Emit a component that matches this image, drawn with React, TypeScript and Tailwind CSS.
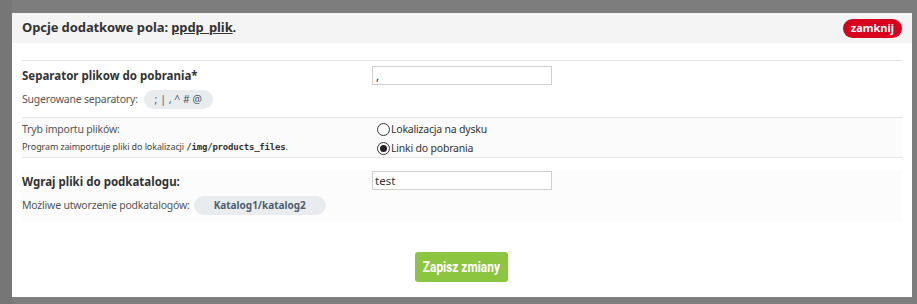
import React from "react";

export default function App() {
  return (
    <div className="w-[917px] h-[304px] bg-[#7d7d7d] relative overflow-hidden" style={{ fontFamily: '"Noto Sans", "Open Sans", sans-serif' }}>
      <div className="absolute left-0 top-0 w-[12px] h-[304px] bg-[#767676]" />
      <div className="absolute left-[12px] top-[13px] w-[900px] h-[284px] bg-white flex flex-col">
        <div className="h-[30px] bg-[#f4f4f4] flex items-center justify-between pl-[10px] pr-[10px]">
          <div className="text-[13px] font-bold text-[#333] tracking-[-0.1px]">
            Opcje dodatkowe pola: <span className="underline">ppdp_plik</span>.
          </div>
          <div className="h-[19px] px-[8px] rounded-full bg-[#d8001c] text-white text-[11px] font-bold flex items-center">zamknij</div>
        </div>
        <div className="px-[10px] pt-[17px]">
          <div className="border-t border-[#e2e2e2]" />
          <div className="flex h-[56px]">
            <div className="w-[350px] pt-[5px]">
              <div className="text-[11.5px] font-bold text-[#333] h-[19px] leading-[19px]">Separator plikow do pobrania*</div>
              <div className="flex items-center mt-[5px] text-[10.5px] tracking-[-0.2px] text-[#555]">
                <span>Sugerowane separatory:</span>
                <span className="ml-[6px] h-[19px] w-[69px] rounded-full bg-[#e9ecef] text-[#4c5966] text-[10.5px] tracking-normal flex items-center justify-center">; | , ^ # @</span>
              </div>
            </div>
            <div className="pt-[5px]">
              <div className="w-[180px] h-[19px] border border-[#cfcfcf] text-[12px] leading-[17px] pl-[3px] text-[#333]">,</div>
            </div>
          </div>
          <div className="border-t border-[#e6e6e6]" />
          <div className="flex h-[39px] bg-[#fbfbfb]">
            <div className="w-[350px] pt-[3px]">
              <div className="text-[10.5px] tracking-[-0.2px] text-[#555] leading-[16px]">Tryb importu plików:</div>
              <div className="text-[9px] tracking-[-0.1px] text-[#444] leading-[14px] mt-[3px]">
                Program zaimportuje pliki do lokalizacji <span className="font-bold text-[9px] tracking-[-0.2px] text-[#333]" style={{ fontFamily: '"DejaVu Sans Mono", monospace' }}>/img/products_files</span>.
              </div>
            </div>
            <div className="pl-[5px] pt-[3px] text-[10.5px] tracking-[-0.2px] text-[#333]">
              <div className="flex items-center h-[17px]">
                <span className="w-[13px] h-[13px] rounded-full border border-[#333] bg-white mr-[1px]" />
                <span>Lokalizacja na dysku</span>
              </div>
              <div className="flex items-center h-[17px] mt-[2px]">
                <span className="w-[13px] h-[13px] rounded-full border border-[#333] bg-white mr-[1px] flex items-center justify-center">
                  <span className="w-[7px] h-[7px] rounded-full bg-[#222]" />
                </span>
                <span>Linki do pobrania</span>
              </div>
            </div>
          </div>
          <div className="border-t border-[#e6e6e6]" />
          <div className="mt-[12px] flex h-[52px] bg-[#fcfcfc]">
            <div className="w-[350px] pt-[2px]">
              <div className="text-[11.5px] font-bold text-[#333] h-[19px] leading-[19px]">Wgraj pliki do podkatalogu:</div>
              <div className="flex items-center mt-[5px] text-[10.5px] tracking-[-0.2px] text-[#555]">
                <span>Możliwe utworzenie podkatalogów:</span>
                <span className="ml-[4px] h-[19px] w-[132px] rounded-full bg-[#e9ecef] text-[#4c5f70] text-[10px] tracking-normal font-bold flex items-center justify-center">Katalog1/katalog2</span>
              </div>
            </div>
            <div className="pt-[1px]">
              <div className="w-[180px] h-[19px] border border-[#cfcfcf] bg-white text-[11.5px] leading-[17px] pl-[2px] text-[#333]">test</div>
            </div>
          </div>
          <div className="flex justify-center mt-[30px]">
            <div className="ml-[-1px] w-[93px] h-[30px] rounded-[3px] bg-[#8cc53f] text-white flex items-center justify-center" style={{ fontFamily: 'Roboto, sans-serif' }}>
              <span className="text-[14px] font-bold scale-x-[0.85] whitespace-nowrap">Zapisz zmiany</span>
            </div>
          </div>
        </div>
      </div>
    </div>
  );
}
